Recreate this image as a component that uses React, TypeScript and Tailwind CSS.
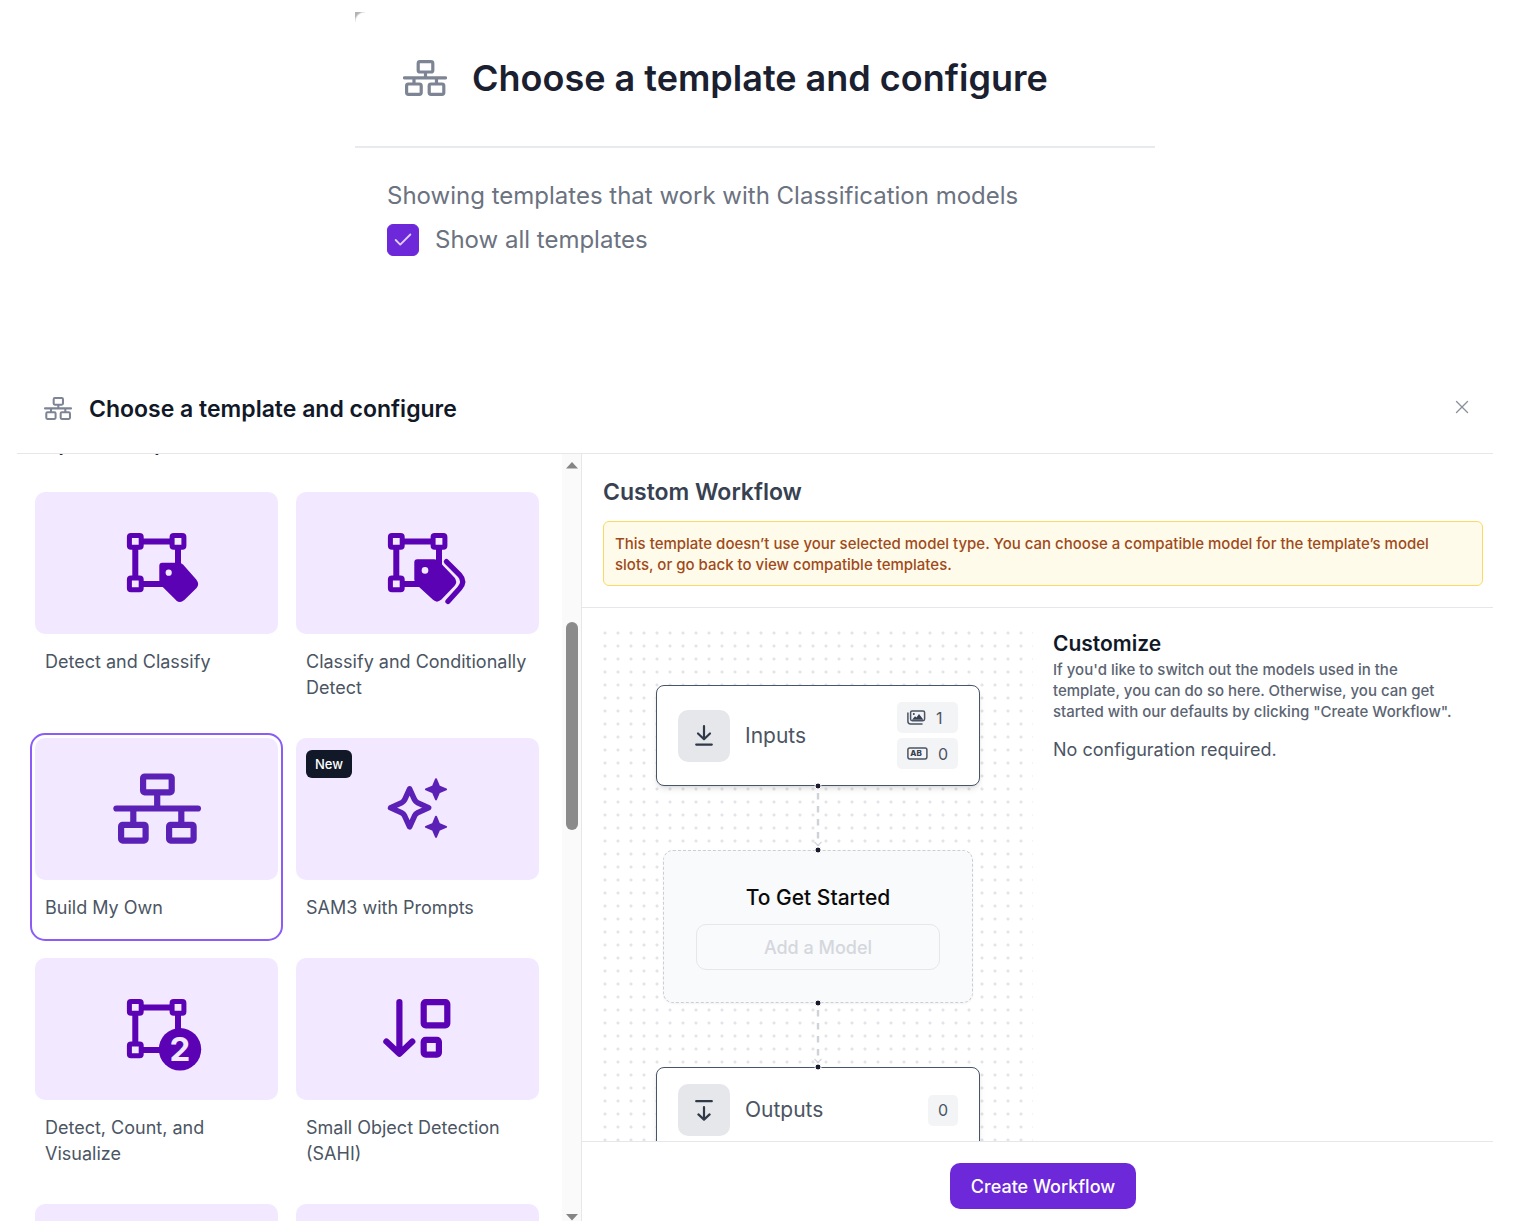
import type { ReactNode } from "react";
import { Check, X } from "lucide-react";

const deep = "#5a02b4";
const violet = "#5b21b6";
const lilac = "#f2e8ff";

function NetworkIcon({ className }: { className: string }) {
  return (
    <svg viewBox="0 0 44 36" className={className} fill="none" stroke="#7d8493" strokeWidth="3.2" aria-hidden="true">
      <rect x="15.2" y="1.6" width="14.6" height="10.4" rx="1.8" />
      <rect x="3.6" y="24" width="14.6" height="10.4" rx="1.8" />
      <rect x="26.2" y="24" width="14.6" height="10.4" rx="1.8" />
      <path d="M1.5 17.8H42.5" strokeLinecap="round" />
      <path d="M22.5 12V18M11 18V24M33.5 18V24" />
    </svg>
  );
}

function Art({ children }: { children: ReactNode }) {
  return (
    <svg viewBox="0 0 243 142" className="h-full w-full" fill="none" aria-hidden="true">
      {children}
    </svg>
  );
}

function BoundingBox() {
  return (
    <g stroke={deep}>
      <path d="M100.3 49.4H143V91.9H100.3Z" strokeWidth="6" />
      <g strokeWidth="5" fill={lilac}>
        <rect x="94.4" y="43.5" width="11.8" height="11.8" rx="1.6" />
        <rect x="137.1" y="43.5" width="11.8" height="11.8" rx="1.6" />
        <rect x="94.4" y="86" width="11.8" height="11.8" rx="1.6" />
      </g>
    </g>
  );
}

function DetectTagArt() {
  return (
    <Art>
      <BoundingBox />
      <path
        d="M127.3 73.7H143.5Q145 73.7 146.2 74.9L159.2 89.8Q161 92 159.2 94.2L147 106Q145.1 107.6 143 106L128.6 91.6Q127.3 90.3 127.3 88.5Z"
        fill={deep}
        stroke={deep}
        strokeWidth="6"
        strokeLinejoin="round"
      />
      <circle cx="133.7" cy="80.7" r="3.1" fill={lilac} />
    </Art>
  );
}

function DetectTagsArt() {
  return (
    <Art>
      <BoundingBox />
      <path
        d="M121.3 70.3H138Q139.8 70.3 141.1 71.5L156 87.2Q158.2 89.7 156 92.2L143 105.6Q141 107.4 139 105.6L122.6 90.6Q121.3 89.2 121.3 87.4Z"
        fill={deep}
        stroke={deep}
        strokeWidth="6"
        strokeLinejoin="round"
      />
      <circle cx="129" cy="78.4" r="3.3" fill={lilac} />
      <path
        d="M150.4 69.6L163.6 82.8Q169.8 89.7 163.6 96.6L151.9 109.4"
        stroke={lilac}
        strokeWidth="10"
      />
      <path
        d="M150.4 69.6L163.6 82.8Q169.8 89.7 163.6 96.6L151.9 109.4"
        stroke={deep}
        strokeWidth="5.2"
        strokeLinecap="round"
      />
    </Art>
  );
}

function BuildArt() {
  return (
    <Art>
      <g stroke={violet} strokeWidth="6.2">
        <rect x="108.1" y="38.5" width="28.6" height="15.8" rx="1.6" />
        <rect x="86.1" y="86.8" width="24.5" height="15.8" rx="1.6" />
        <rect x="134.1" y="86.8" width="24.5" height="15.8" rx="1.6" />
        <path d="M81.4 70.5H162.9" strokeLinecap="round" />
        <path d="M122.2 54V70M98.3 70V87M146.3 70V87" />
      </g>
    </Art>
  );
}

function SparklesArt() {
  return (
    <Art>
      <path
        d="M0 -19L5 -8Q6 -6 8 -5L19 0L8 5Q6 6 5 8L0 19L-5 8Q-6 6 -8 5L-19 0L-8 -5Q-6 -6 -5 -8Z"
        transform="translate(113.6 69.8)"
        stroke={violet}
        strokeWidth="5.6"
        strokeLinejoin="round"
      />
      <g fill={violet} stroke={violet} strokeWidth="2" strokeLinejoin="round">
        <path d="M140 41.2L143 48.3L150.1 51.3L143 54.3L140 61.4L137 54.3L129.9 51.3L137 48.3Z" />
        <path d="M140 78.7L143 85.8L150.1 88.8L143 91.8L140 98.9L137 91.8L129.9 88.8L137 85.8Z" />
      </g>
    </Art>
  );
}

function CountArt() {
  return (
    <Art>
      <BoundingBox />
      <circle cx="145" cy="91.3" r="21.2" fill={deep} />
      <text x="145" y="102.8" textAnchor="middle" fontSize="33" fontWeight="700" fill={lilac}>
        2
      </text>
    </Art>
  );
}

function SmallObjectArt() {
  return (
    <Art>
      <g stroke={deep} strokeWidth="6.2" strokeLinecap="round" strokeLinejoin="round">
        <path d="M103.4 44.2V95.5M90.4 83.6L103.4 95.7L116.3 83.6" />
        <rect x="127.7" y="44.1" width="23.6" height="23.2" rx="2" />
        <rect x="127.7" y="81.8" width="15.2" height="14.8" rx="2" />
      </g>
    </Art>
  );
}

function TemplateCard({
  label,
  art,
  selected = false,
  isNew = false,
}: {
  label: string;
  art?: ReactNode;
  selected?: boolean;
  isNew?: boolean;
}) {
  return (
    <button
      type="button"
      aria-pressed={selected}
      className={
        selected
          ? "relative flex flex-col self-start rounded-[10px] pb-[15px] text-left outline-2 outline-offset-3 outline-[#8b5cf6]"
          : "relative flex flex-col self-start rounded-[10px] pb-[15px] text-left"
      }
    >
      <span className="block h-[142px] w-full rounded-[10px] bg-[#f2e8ff]">{art}</span>
      {isNew && (
        <span className="absolute top-3 left-[10px] rounded-md bg-[#111827] px-[9px] text-[13px] leading-7 font-medium text-white">
          New
        </span>
      )}
      <span className="px-[10px] pt-[15px] text-[18px] leading-[26px] text-[#4b5563]">{label}</span>
    </button>
  );
}

function Connector() {
  return (
    <svg width="20" height="64" viewBox="0 0 20 64" className="relative z-10 shrink-0 overflow-visible" fill="none" aria-hidden="true">
      <path d="M10 7V60" stroke="#cfd2d7" strokeWidth="2.4" strokeDasharray="6.5 6.5" />
      <path d="M6.5 56L10 59.5L13.5 56" stroke="#d1d5db" strokeWidth="1.2" />
      <circle cx="10" cy="0" r="3" fill="#1c1b2e" stroke="#fff" strokeWidth="1" />
      <circle cx="10" cy="64" r="3" fill="#1c1b2e" stroke="#fff" strokeWidth="1" />
    </svg>
  );
}

function FlowNode({ label, icon, children }: { label: string; icon: ReactNode; children: ReactNode }) {
  return (
    <div className="flex w-[324px] shrink-0 items-center rounded-lg border border-[#475569] bg-white px-[21px] py-4 shadow-md">
      <div className="flex size-[52px] items-center justify-center rounded-[10px] bg-[#e5e7eb]">{icon}</div>
      <span className="ml-[15px] flex-1 text-[21px] leading-7 text-[#4b5563]">{label}</span>
      <div className="flex flex-col gap-[5px]">{children}</div>
    </div>
  );
}

function Chip({ icon, value }: { icon?: ReactNode; value: string }) {
  return (
    <span className="flex h-[31px] items-center gap-[10px] rounded-[5px] bg-[#f3f4f6] px-[10px] text-[16px] text-[#4b5563]">
      {icon}
      <span>{value}</span>
    </span>
  );
}

export default function App() {
  return (
    <div className="flex h-screen flex-col bg-white pt-3 pb-[3px] font-['Inter',sans-serif] text-[#4b5563]">
      <section className="relative mx-auto h-[352px] w-full max-w-[800px] shrink-0 -translate-x-[7px]">
        <span className="absolute top-0 left-0 size-[10px] bg-[radial-gradient(circle_at_bottom_right,transparent_9px,#b3b3b3_11px)]" />
        <header className="flex items-center gap-[25px] border-b-2 border-[#e9eaf0] px-12 pt-11 pb-[46px]">
          <NetworkIcon className="h-9 w-11" />
          <h2 className="text-[36px] leading-[44px] font-semibold text-[#1a2030]">Choose a template and configure</h2>
        </header>
        <div className="px-8 pt-7">
          <p className="text-[24px] leading-10 text-[#6b7280]">Showing templates that work with Classification models</p>
          <div className="mt-2 flex items-center gap-4">
            <span className="relative flex size-8">
              <input
                id="show-all"
                type="checkbox"
                defaultChecked
                className="peer size-8 appearance-none rounded-md border border-[#6d28d9] checked:bg-[#6d28d9]"
              />
              <Check className="pointer-events-none absolute top-[5px] left-[5px] hidden size-[22px] text-[#ded0f6] peer-checked:block" strokeWidth={2} />
            </span>
            <label htmlFor="show-all" className="text-[24px] leading-8 text-[#6b7280]">
              Show all templates
            </label>
          </div>
        </div>
      </section>

      <section className="mr-[31px] ml-[17px] flex min-h-0 flex-1 flex-col">
        <header className="flex h-[90px] shrink-0 items-center border-b border-[#e5e7eb] pr-6 pl-[27px]">
          <NetworkIcon className="h-[23px] w-7" />
          <h1 className="ml-[17px] flex-1 text-[23px] leading-7 font-semibold text-[#111827]">
            Choose a template and configure
          </h1>
          <button type="button" aria-label="Close" className="-mt-1 -mr-1 text-[#8b919d]">
            <X className="size-[22px]" strokeWidth={1.5} />
          </button>
        </header>

        <div className="grid min-h-0 flex-1 grid-cols-[565fr_911fr]">
          <aside className="flex min-h-0 border-r border-[#e5e7eb]">
            <div className="min-w-0 flex-1 overflow-hidden pr-[23px] pl-[18px]">
              <h3 className="-mt-[23px] mb-[35px] text-[20px] leading-[26px] font-semibold text-[#1f2937]">Explore Templates</h3>
              <div className="grid grid-cols-2 gap-x-[18px] gap-y-[22px]">
                <TemplateCard label="Detect and Classify" art={<DetectTagArt />} />
                <TemplateCard label="Classify and Conditionally Detect" art={<DetectTagsArt />} />
                <TemplateCard label="Build My Own" art={<BuildArt />} selected />
                <TemplateCard label="SAM3 with Prompts" art={<SparklesArt />} isNew />
                <TemplateCard label="Detect, Count, and Visualize" art={<CountArt />} />
                <TemplateCard label="Small Object Detection (SAHI)" art={<SmallObjectArt />} />
                <TemplateCard label="" />
                <TemplateCard label="" />
              </div>
            </div>
            <div className="flex w-[19px] shrink-0 flex-col items-center bg-[#fafafa] pt-2">
              <svg width="12" height="7" viewBox="0 0 12 7" aria-hidden="true">
                <path d="M6 0L12 6.5H0Z" fill="#858585" />
              </svg>
              <div className="mt-[153px] h-[208px] w-3 rounded-full bg-[#8b8b8b]" />
              <svg width="12" height="7" viewBox="0 0 12 7" className="mt-auto" aria-hidden="true">
                <path d="M0 0H12L6 6.5Z" fill="#858585" />
              </svg>
            </div>
          </aside>

          <main className="flex min-h-0 min-w-0 flex-col">
            <div className="shrink-0 border-b border-[#e5e7eb] pt-6 pr-[10px] pb-[21px] pl-[21px]">
              <h2 className="text-[23px] leading-7 font-semibold text-[#374151]">Custom Workflow</h2>
              <p role="alert" className="mt-[15px] rounded-md border border-[#fcd964] bg-[#fffbeb] px-[11px] pt-[11px] pb-[10px] text-[15px] leading-[21px] font-medium text-[#a04a1a]">
                This template doesn’t use your selected model type. You can choose a compatible model for the template’s model slots, or go back to view compatible templates.
              </p>
            </div>

            <div className="flex min-h-0 flex-1 gap-5 pt-[22px] pr-[10px] pl-[21px]">
              <div className="flex min-w-0 flex-1 flex-col items-center overflow-hidden bg-[radial-gradient(circle_at_2px_3px,#e3e4e8_1px,transparent_2px)] bg-[size:13px_13px] pt-[55px]">
                <FlowNode
                  label="Inputs"
                  icon={
                    <svg width="18" height="21" viewBox="0 0 18 21" fill="none" stroke="#2f3949" strokeWidth="2.2" strokeLinecap="round" strokeLinejoin="round" aria-hidden="true">
                      <path d="M9 1.2V14M3 8.5L9 14.2L15 8.5M1.2 19.6H16.8" />
                    </svg>
                  }
                >
                  <Chip
                    value="1"
                    icon={
                      <svg width="19" height="15" viewBox="0 0 19 15" fill="none" aria-hidden="true">
                        <rect x="3.6" y="0.9" width="14" height="9.8" rx="1.6" stroke="#4b5563" strokeWidth="1.5" />
                        <path d="M0.9 3V11.2Q0.9 13.9 3.6 13.9H15" stroke="#4b5563" strokeWidth="1.5" strokeLinecap="round" />
                        <path d="M5 9.8L8 6.2L9.4 7.6L12 4L16.4 9.8Z" fill="#374151" />
                        <circle cx="6.8" cy="3.9" r="1" fill="#374151" />
                      </svg>
                    }
                  />
                  <Chip
                    value="0"
                    icon={
                      <svg width="21" height="13" viewBox="0 0 21 13" fill="none" aria-hidden="true">
                        <rect x="0.9" y="0.9" width="19" height="11" rx="1.8" stroke="#4b5563" strokeWidth="1.5" />
                        <text x="9" y="9.4" textAnchor="middle" fontSize="8" fontWeight="800" fill="#374151">
                          AB
                        </text>
                      </svg>
                    }
                  />
                </FlowNode>
                <Connector />
                <div className="flex w-[310px] shrink-0 flex-col items-center rounded-[10px] border border-dashed border-[#cbced4] bg-[#f9fafb] px-8 pt-[33px] pb-8 shadow-xs">
                  <h3 className="text-[21px] leading-7 font-medium text-[#0a0a0a]">To Get Started</h3>
                  <button type="button" disabled className="mt-3 h-[46px] w-full rounded-[10px] border border-[#e5e7eb] text-[18px] font-medium text-[#d4d7dd]">
                    Add a Model
                  </button>
                </div>
                <Connector />
                <FlowNode
                  label="Outputs"
                  icon={
                    <svg width="18" height="21" viewBox="0 0 18 21" fill="none" stroke="#2f3949" strokeWidth="2.2" strokeLinecap="round" strokeLinejoin="round" aria-hidden="true">
                      <path d="M1.2 1.2H16.8M9 7V19.4M3.4 14.4L9 19.6L14.6 14.4" />
                    </svg>
                  }
                >
                  <Chip value="0" />
                </FlowNode>
              </div>

              <div className="min-w-0 flex-1">
                <h3 className="text-[21px] leading-7 font-semibold text-[#111827]">Customize</h3>
                <p className="mt-px pr-4 text-[15px] leading-[21px] font-medium text-[#5b6472]">
                  If you'd like to switch out the models used in the template, you can do so here. Otherwise, you can get started with our defaults by clicking "Create Workflow".
                </p>
                <p className="mt-[15px] text-[18px] leading-[26px]">No configuration required.</p>
              </div>
            </div>

            <footer className="flex shrink-0 justify-center border-t border-[#e5e7eb] pt-[21px] pr-[10px] pb-3 pl-[21px]">
              <button type="button" className="h-[46px] rounded-[10px] bg-[#6d28d9] px-[21px] text-[18px] font-medium text-white">
                Create Workflow
              </button>
            </footer>
          </main>
        </div>
      </section>
    </div>
  );
}
